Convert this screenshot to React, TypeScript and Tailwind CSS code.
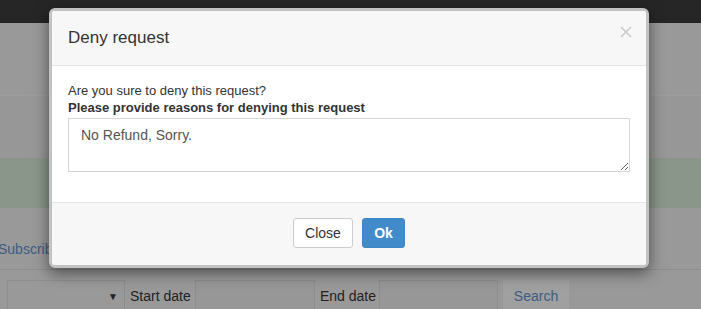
import React from "react";

const font = { fontFamily: '"Liberation Sans", Arial, sans-serif' };

function Backdrop() {
  return (
    <div className="w-[701px] h-[309px] overflow-hidden bg-[#999999]">
      <div className="h-[23px] bg-[#262626]" />
      <div className="h-[72px] bg-[#999999]" />
      <div className="h-[63px] border-t border-[#9d9d9d] bg-[#979797]" />
      <div className="h-[50px] bg-[#8a9689]" />
      <div className="flex h-[61px] items-end pb-[9px]">
        <span className="-ml-[2px] text-[14px] text-[#3d5c80]">Subscrib</span>
      </div>
      <div className="h-px bg-[#8d8d8d]" />
      <div className="flex items-center pl-[7px] pt-[10px] text-[14px] text-[#222]">
        <div className="flex h-[32px] w-[118px] items-center justify-end border border-[#8e8e8e] pr-[6px] text-[10px] text-[#222]">
          ▼
        </div>
        <span className="ml-[5px] w-[65px]">Start date</span>
        <div className="h-[32px] w-[120px] border border-[#8e8e8e] bg-[#979797]" />
        <span className="ml-[5px] w-[59px]">End date</span>
        <div className="h-[32px] w-[119px] border border-[#8e8e8e] bg-[#979797]" />
        <div className="ml-[5px] flex h-[32px] w-[66px] items-center justify-center bg-[#a0a0a0] text-[#3d5c80]">
          Search
        </div>
      </div>
    </div>
  );
}

export default function App() {
  return (
    <div className="relative w-[701px] h-[309px] overflow-hidden" style={font}>
      <Backdrop />
      <div className="absolute left-[49px] top-[8px] w-[600px] rounded-[6px] border-[3px] border-[#c2c2c2] bg-white shadow-[0_5px_15px_rgba(0,0,0,0.5)]">
        <div className="flex h-[55px] items-center justify-between border-b border-[#e5e5e5] bg-[#f7f7f7] pl-[16px] pr-[14px] rounded-t-[3px]">
          <h4 className="text-[17px] text-[#333]">Deny request</h4>
          <svg width="12" height="12" viewBox="0 0 12 12" className="-mt-[13px]">
            <path d="M1 1 L11 11 M11 1 L1 11" stroke="#c4c4c4" strokeWidth="1.4" fill="none" />
          </svg>
        </div>
        <div className="px-[16px] pb-[30px] pt-[16px] text-[13px] leading-[17px] text-[#333]">
          <p>Are you sure to deny this request?</p>
          <p className="font-bold">Please provide reasons for denying this request</p>
          <textarea
            readOnly
            value="No Refund, Sorry."
            className="mt-[2px] block h-[54px] w-[562px] border border-[#d6d6d6] px-[12px] py-[6px] text-[14px] leading-[20px] text-[#555] outline-none"
            style={font}
          />
        </div>
        <div className="flex h-[63px] items-start justify-center gap-[9px] border-t border-[#e5e5e5] bg-[#f7f7f7] pt-[15px] rounded-b-[3px]">
          <button className="h-[30px] w-[60px] rounded-[3px] border border-[#cccccc] bg-white text-[14px] text-[#333]">
            Close
          </button>
          <button className="h-[30px] w-[43px] rounded-[3px] border border-[#3b87c9] bg-[#428bca] text-[14px] font-bold text-white">
            Ok
          </button>
        </div>
      </div>
    </div>
  );
}
